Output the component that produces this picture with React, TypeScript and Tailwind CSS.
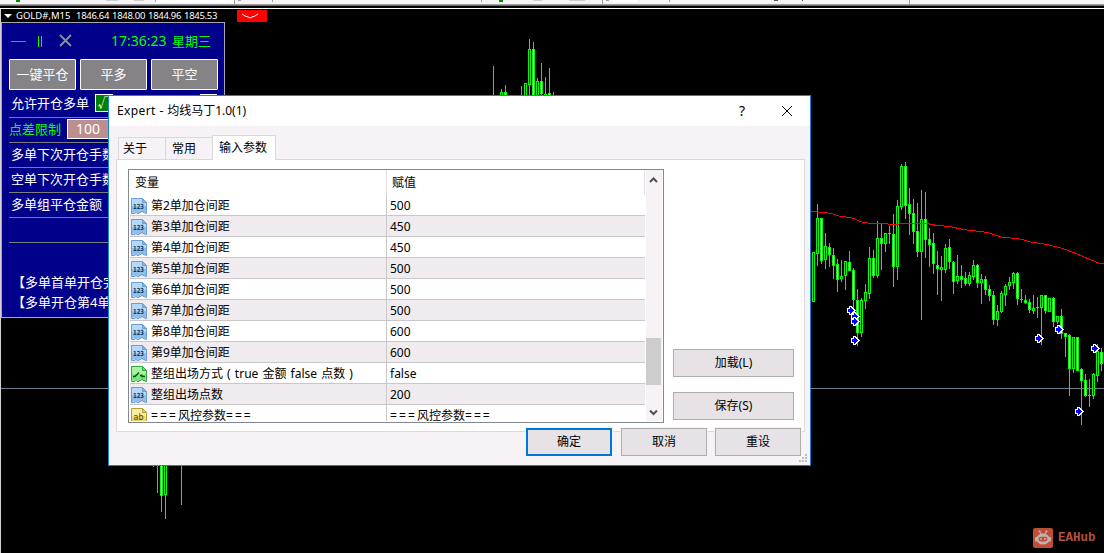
import type { ReactNode } from "react";

type Candle = [x: number, high: number, low: number, top: number, bottom: number, down: 0 | 1];

const candles: Candle[] = [
  [153, 460, 466, 460, 460, 0], [157, 460, 492, 460, 460, 0], [161, 460, 511, 460, 495, 1],
  [165, 460, 518, 460, 494, 0], [181, 460, 504, 460, 460, 0], [493, 66, 100, 100, 100, 0],
  [501, 89, 100, 92, 100, 0], [505, 85, 100, 92, 100, 1], [521, 86, 100, 100, 100, 0],
  [525, 83, 100, 83, 100, 0], [529, 39, 100, 49, 84, 0], [533, 42, 100, 49, 100, 1],
  [537, 78, 100, 81, 100, 0], [541, 63, 94, 81, 93, 1], [545, 77, 100, 94, 94, 0],
  [549, 68, 100, 93, 100, 1], [553, 92, 100, 100, 100, 0],
  [813, 252, 301, 252, 301, 0], [817, 204, 265, 218, 253, 0], [821, 218, 263, 218, 260, 1],
  [825, 233, 268, 246, 259, 0], [829, 243, 266, 247, 254, 1], [833, 248, 278, 255, 265, 1],
  [837, 259, 291, 264, 279, 1], [841, 260, 281, 276, 278, 0], [845, 261, 289, 261, 275, 0],
  [849, 251, 270, 262, 270, 1], [853, 268, 308, 270, 299, 1], [857, 289, 345, 300, 332, 1],
  [861, 298, 336, 300, 332, 0], [865, 284, 308, 292, 300, 0], [869, 247, 298, 258, 293, 0],
  [873, 250, 277, 258, 275, 1], [877, 221, 277, 238, 275, 0], [881, 224, 269, 238, 243, 1],
  [885, 233, 251, 233, 243, 0], [889, 226, 243, 233, 233, 0], [893, 214, 286, 234, 266, 1],
  [897, 200, 279, 206, 266, 0], [901, 164, 209, 166, 206, 0], [905, 162, 218, 166, 205, 1],
  [909, 188, 234, 204, 213, 1], [913, 199, 243, 213, 231, 1], [917, 203, 256, 231, 251, 1],
  [921, 190, 319, 219, 251, 0], [925, 192, 257, 219, 239, 1], [929, 228, 266, 239, 244, 1],
  [933, 233, 273, 243, 263, 1], [937, 251, 294, 265, 268, 1], [941, 256, 300, 267, 269, 0],
  [945, 244, 272, 248, 269, 0], [949, 239, 268, 247, 261, 1], [953, 261, 293, 262, 281, 1],
  [957, 255, 283, 276, 280, 0], [961, 265, 287, 276, 279, 1], [965, 272, 285, 278, 283, 1],
  [969, 272, 285, 275, 283, 0], [973, 260, 279, 265, 276, 0], [977, 264, 287, 265, 282, 1],
  [981, 274, 303, 279, 282, 0], [985, 276, 294, 279, 289, 1], [989, 285, 300, 289, 295, 1],
  [993, 291, 324, 295, 319, 1], [997, 305, 325, 311, 319, 0], [1001, 291, 312, 293, 311, 0],
  [1005, 284, 305, 286, 294, 0], [1009, 277, 289, 282, 285, 0], [1013, 272, 288, 273, 282, 0],
  [1017, 272, 304, 273, 298, 1], [1021, 289, 302, 299, 299, 0], [1025, 295, 303, 300, 302, 1],
  [1029, 299, 312, 302, 309, 1], [1033, 295, 313, 308, 310, 0], [1037, 297, 317, 307, 307, 0],
  [1041, 295, 344, 295, 307, 0], [1045, 295, 313, 295, 310, 1], [1049, 298, 311, 298, 311, 0],
  [1053, 297, 326, 298, 321, 1], [1057, 316, 323, 316, 321, 0], [1061, 309, 338, 316, 333, 1],
  [1065, 333, 356, 333, 336, 1], [1069, 334, 395, 335, 368, 1], [1073, 337, 372, 337, 368, 0],
  [1077, 337, 370, 337, 370, 1], [1081, 368, 424, 369, 380, 1], [1085, 374, 396, 380, 395, 1],
  [1089, 379, 406, 395, 395, 0], [1093, 373, 398, 374, 395, 0], [1097, 344, 381, 351, 375, 0],
  [1101, 348, 370, 352, 363, 1],
];

const arrows = [
  [851, 310], [855, 316], [855, 321], [855, 340],
  [1039, 338], [1059, 329], [1095, 348], [1079, 411],
];

const rows = [
  { kind: "num", name: "第2单加仓间距", value: "500" },
  { kind: "num", name: "第3单加仓间距", value: "450" },
  { kind: "num", name: "第4单加仓间距", value: "450" },
  { kind: "num", name: "第5单加仓间距", value: "500" },
  { kind: "num", name: "第6单加仓间距", value: "500" },
  { kind: "num", name: "第7单加仓间距", value: "500" },
  { kind: "num", name: "第8单加仓间距", value: "600" },
  { kind: "num", name: "第9单加仓间距", value: "600" },
  { kind: "bool", name: "整组出场方式 ( true 金额 false 点数 )", value: "false" },
  { kind: "num", name: "整组出场点数", value: "200" },
  { kind: "str", name: "===风控参数===", value: "===风控参数===" },
];

const Chart = () => (
  <svg className="absolute inset-0" width="1104" height="553" shapeRendering="crispEdges">
    <rect x="1" y="388" width="1103" height="1" fill="#708090" />
    {candles.map(([x, high, low, top, bottom, down]) => (
      <g key={x} fill="#00ff00">
        <rect x={x} y={high} width="1" height={low - high + 1} />
        <rect x={x - 1} y={top} width="3" height={bottom - top + 1} />
        {bottom - top > 1 && (
          <rect x={x} y={top + 1} width="1" height={bottom - top - 1} fill={down ? "#fff" : "#000"} />
        )}
      </g>
    ))}
    <polyline
      fill="none"
      stroke="#ff0000"
      points="811,211.5 823,212.5 832,213.5 840,216.5 851,217.5 863,222.5 873,223.5 887,223.5 889,224.5 898,224.5 900,223.5 927,223.5 937,225.5 950,226.5 963,229.5 980,231.5 987,232.5 1003,237.5 1018,238.5 1033,242.5 1047,244.5 1063,248.5 1076,253.5 1083,256.5 1090,259.5 1100,263.5 1104,263.5"
    />
    {arrows.map(([x, y]) => (
      <g key={`${x}-${y}`} transform={`translate(${x - 4} ${y - 4})`}>
        <path d="M0 2h2v-2h3v1h1v1h1v1h1v1h1v1h-1v1h-1v1h-1v1h-1v1h-3v-2h-2z" fill="#fff" />
        <path d="M1 3h2v-2h1v1h1v1h1v1h1v1h-1v1h-1v1h-1v1h-1v-2h-2z" fill="#0000ff" />
      </g>
    ))}
  </svg>
);

const Toolbar = () => (
  <div className="h-[9px] w-full border-b border-white bg-black">
    <svg className="block" width="1104" height="6" shapeRendering="crispEdges">
      <rect width="1104" height="4" fill="#f6f3f6" />
      <rect y="4" width="1104" height="1" fill="#a09da0" />
      <rect y="5" width="1104" height="1" fill="#686868" />
      <g fill="#fff">
        <rect x="156" width="77" height="3" />
        <rect x="612" width="26" height="2" />
      </g>
      <g fill="#cfcccf">
        <rect x="106" width="12" height="1" />
        <rect x="134" width="10" height="1" />
        <rect x="533" width="9" height="1" />
        <rect x="569" width="16" height="1" />
      </g>
      <g fill="#a09da0">
        <rect x="155" width="1" height="2" />
        <rect x="234" width="1" height="4" />
        <rect x="238" width="3" height="1" />
        <rect x="272" width="1" height="2" />
        <rect x="481" width="1" height="2" />
        <rect x="602" width="1" height="4" />
        <rect x="606" width="3" height="1" />
        <rect x="669" width="1" height="2" />
        <rect x="909" width="1" height="4" />
      </g>
      <g fill="#008a00">
        <rect x="16" width="4" height="2" />
        <rect x="499" width="4" height="2" />
      </g>
      <g fill="#555">
        <rect x="774" width="4" height="1" />
        <rect x="802" width="1" height="1" />
      </g>
    </svg>
  </div>
);

const PanelButton = ({ children }: { children: ReactNode }) => (
  <div className="flex h-[31px] w-[67px] shrink-0 items-center justify-center rounded-[1px] border border-white bg-[#858385] text-[13px]">
    {children}
  </div>
);

const PanelRow = ({ children }: { children?: ReactNode }) => (
  <div className="flex h-[25px] items-center border-b border-[#7d7d7d] pb-[2px] pl-[2px] whitespace-nowrap">
    {children}
  </div>
);

const TradePanel = () => (
  <div className="absolute top-[22px] left-[1px] h-[296px] w-[224px] overflow-hidden border border-[#a9a9b4] bg-[#00008b] pr-[5px] pl-[7px] text-[13px] leading-none text-white">
    <div className="flex h-[36px] items-center text-[#00ff00]">
      <svg className="shrink-0" width="64" height="20" viewBox="0 0 64 20" fill="none">
        <path d="M2 10.5h15" stroke="#778899" />
        <path d="M29.500 5v11M32.500 5v11" stroke="#00ff00" />
        <path d="M51 4l11 11M62 4l-11 11" stroke="#8593a3" strokeWidth="1.800" />
      </svg>
      <span className="ml-[38px] w-[61px] text-[14px] whitespace-nowrap">17:36:23</span>
      <span>星期三</span>
    </div>
    <div className="flex gap-[4px]">
      <PanelButton>一键平仓</PanelButton>
      <PanelButton>平多</PanelButton>
      <PanelButton>平空</PanelButton>
    </div>
    <div className="flex h-[28px] items-center border-b border-[#7d7d7d] pl-[2px]">
      <span className="w-[84px]">允许开仓多单</span>
      <span className="-mt-[2px] flex h-[18px] w-[18px] items-center justify-center border border-white bg-[#008000]">√</span>
      <span className="-mt-[2px] ml-[87px] h-[18px] w-[17px] border border-white bg-[#008000]" />
    </div>
    <div className="flex h-[25px] items-center border-b border-[#7d7d7d] pb-[2px]">
      <span className="w-[58px] text-[#00ff00]">点差限制</span>
      <span className="flex h-[20px] w-[60px] items-center border border-white bg-[#bc8f8f] pl-[8px] text-[14px]">100</span>
    </div>
    <PanelRow>多单下次开仓手数</PanelRow>
    <PanelRow>空单下次开仓手数</PanelRow>
    <PanelRow>多单组平仓金额</PanelRow>
    <PanelRow />
    <div className="mt-[33px] flex w-[105px] flex-col gap-[7px] pl-[3px] whitespace-nowrap">
      <span>【多单首单开仓完</span>
      <span>【多单开仓第4单</span>
    </div>
  </div>
);

const ParamIcon = ({ kind }: { kind: string }) => {
  const [light, dark, edge, ink] =
    kind === "num"
      ? ["#b4d9fb", "#7db4e6", "#6c9fd0", "#12365f"]
      : kind === "bool"
        ? ["#a6f3a2", "#6be06d", "#35a843", "#0a4d14"]
        : ["#f8eda0", "#e8d45c", "#b79d35", "#4d3b08"];
  return (
    <svg className="shrink-0" width="16" height="16" viewBox="0 0 16 16">
      <path
        d="M.5 .5h11l4 4v11h-1.500v-1h-2v-1h-2v1h-2v1h-2v-1h-2v1h-3.500z"
        fill={light}
        stroke={edge}
      />
      <path d="M1 8h14v6h-3v-1h-3v1h-3v1h-2v-1h-2v1h-1z" fill={dark} opacity=".7" />
      <path d="M11.500 .5v4h4z" fill={dark} stroke={edge} />
      {kind === "bool" ? (
        <path d="M2 10.500h2l4-4M9 9.500h2v1h3" fill="none" stroke={ink} strokeWidth="1.300" />
      ) : (
        <text
          x="7.500"
          y={kind === "num" ? 11 : 12}
          textAnchor="middle"
          fill={ink}
          fontSize={kind === "num" ? 7 : 9}
          fontWeight={kind === "num" ? 700 : 400}
          fontFamily="DejaVu Sans, sans-serif"
          textLength={kind === "num" ? 11 : 10}
          lengthAdjust="spacingAndGlyphs"
        >
          {kind === "num" ? "123" : "ab"}
        </text>
      )}
    </svg>
  );
};

// the === markers of section titles are set wider than the title itself
const ParamText = ({ children }: { children: string }) => (
  <span className="whitespace-pre">
    {children.split(/(===)/).map((part, i) => (
      <span key={i} className={part === "===" ? "tracking-[2.1px]" : ""}>
        {part}
      </span>
    ))}
  </span>
);

const ParamTable = () => (
  <div className="flex h-[254px] w-[536px] justify-between border border-[#828790] bg-white p-px pt-0">
    <div className="w-[515px] overflow-hidden">
      <div className="flex h-[25px] items-center border-r border-[#e2e0e2]">
        <span className="flex h-full w-[257px] items-center border-r border-[#e2e0e2] pl-[5px]">变量</span>
        <span className="pl-[5px]">赋值</span>
      </div>
      {rows.map((row, i) => (
        <div
          key={row.name}
          className={`flex h-[21px] items-center border-b border-[#c9c7c9] pt-px ${i % 2 ? "bg-[#efebef]" : "bg-white"}`}
        >
          <div className="-mt-px flex h-[20px] w-[257px] items-center gap-1 border-r border-[#c9c7c9] pt-[2px] pl-px">
            <ParamIcon kind={row.kind} />
            <span className={row.kind === "bool" ? "[word-spacing:1px]" : ""}>
              <ParamText>{row.name}</ParamText>
            </span>
          </div>
          <span className="pt-px pl-[3px]">
            <ParamText>{row.value}</ParamText>
          </span>
        </div>
      ))}
    </div>
    <div className="flex w-[16px] flex-col items-center bg-[#f6f2f6]">
      <svg className="shrink-0" width="16" height="18" viewBox="0 0 16 18">
        <path d="M4 12l3.500-3.500l3.500 3.500" fill="none" stroke="#505050" strokeWidth="2" />
      </svg>
      <div className="mt-[150px] -ml-px h-[47px] w-[15px] shrink-0 bg-[#cdcdcd]" />
      <svg className="mt-auto shrink-0" width="16" height="18" viewBox="0 0 16 18">
        <path d="M4 7.500l3.500 3.500l3.500-3.500" fill="none" stroke="#505050" strokeWidth="2" />
      </svg>
    </div>
  </div>
);

const DialogButton = ({ className, children }: { className: string; children: ReactNode }) => (
  <button className={`flex h-[28px] items-center justify-center bg-[#e6e2e6] ${className}`}>{children}</button>
);

const ExpertDialog = () => (
  <div className="absolute top-[95px] left-[108px] flex h-[371px] w-[703px] flex-col border border-[#1883d7] bg-[#f6f2f6] text-[12px] leading-none text-black">
    <div className="flex h-[30px] shrink-0 items-center bg-white pl-2">
      <span>
        <span className="tracking-[0.4px]">Expert - </span>均线马丁1.0(1)
      </span>
      <span className="ml-auto text-[14px]">?</span>
      <svg className="mr-[17px] ml-[36px]" width="12" height="12" viewBox="0 0 12 12">
        <path d="M1 1l10 10M11 1L1 11" stroke="#000" />
      </svg>
    </div>
    <div className="flex h-[33px] shrink-0 items-end pl-[9px]">
      <div className="flex h-[22px] w-[47px] items-center border-t border-l border-[#dcd9dc] pl-[4px]">关于</div>
      <div className="flex h-[22px] w-[47px] items-center border-t border-l border-[#dcd9dc] pl-[6px]">常用</div>
      <div className="z-10 -mb-px flex h-[25px] w-[64px] items-center border border-b-0 border-[#dcd9dc] bg-white pl-[6px]">
        输入参数
      </div>
    </div>
    <div className="ml-[7px] flex h-[273px] w-[689px] shrink-0 gap-[9px] border border-[#dcd9dc] bg-white pt-[9px] pl-[11px]">
      <ParamTable />
      <div className="flex flex-col gap-[15px] pt-[180px]">
        <DialogButton className="w-[121px] border border-[#adadad]">加载(L)</DialogButton>
        <DialogButton className="w-[121px] border border-[#adadad]">保存(S)</DialogButton>
      </div>
    </div>
    <div className="relative -mt-[4px] flex justify-end gap-[8px] pr-[9px]">
      <DialogButton className="mr-px w-[86px] border-2 border-[#0078d7] shadow-[0_0_0_1px_#f6f2f6]">确定</DialogButton>
      <DialogButton className="w-[86px] border border-[#adadad] shadow-[0_0_0_1px_#f6f2f6]">取消</DialogButton>
      <DialogButton className="w-[86px] border border-[#adadad] shadow-[0_0_0_1px_#f6f2f6]">重设</DialogButton>
      <svg className="absolute right-[3px] -bottom-[7px]" width="8" height="9" viewBox="0 0 8 9" fill="#bfbfbf">
        <path d="M6 0h2v2h-2zM3 3h2v2h-2zM6 3h2v2h-2zM0 6h2v2h-2zM3 6h2v2h-2zM6 6h2v2h-2z" />
      </svg>
    </div>
  </div>
);

const App = () => {
  return (
    <main className="relative h-[553px] w-[1104px] overflow-hidden bg-black font-['Noto_Sans','Noto_Sans_CJK_SC',sans-serif]">
      <Toolbar />
      <Chart />
      <div className="relative flex h-[14px] items-center border-l border-[#d4d0d4] pl-[3px] text-[9.500px] leading-none whitespace-nowrap text-white">
        <svg width="8" height="5" viewBox="0 0 8 5">
          <path d="M0 0h8l-4 4z" fill="#fff" />
        </svg>
        <span className="ml-[4px] w-[60px]">GOLD#,M15</span>
        <span className="tracking-[-0.3px] [word-spacing:0.8px]">1846.64 1848.00 1844.96 1845.53</span>
        <svg className="absolute top-px left-[236px]" width="30" height="12" viewBox="0 0 30 12">
          <rect width="30" height="12" fill="#ff0000" />
          <path d="M5 4l4 2.500h1l3 1.500l3-1.500h1l4-2.500" fill="none" stroke="#fff" />
        </svg>
      </div>
      <div className="h-full w-px bg-[#d4d0d4]" />
      <TradePanel />
      <ExpertDialog />
      <div className="absolute top-[528px] left-[1033px] flex items-center gap-[5px] font-['Liberation_Mono',monospace] text-[12.500px] leading-none font-bold text-[#b4533c]">
        <svg width="20" height="20" viewBox="0 0 20 20">
          <rect width="20" height="20" rx="2" fill="#c04e36" />
          <path d="M6.500 3l2 4M13.500 3l-2 4" stroke="#bcb2b0" strokeWidth="1.200" />
          <circle cx="6.500" cy="3.300" r="1" fill="#bcb2b0" />
          <circle cx="13.500" cy="3.300" r="1" fill="#bcb2b0" />
          <rect x="2" y="9" width="16" height="4.500" rx="1" fill="#bcb2b0" />
          <ellipse cx="10" cy="11" rx="6.500" ry="5.500" fill="#bcb2b0" />
          <rect x="5.500" y="8.800" width="9" height="4.600" rx="2.300" fill="#c04e36" />
          <circle cx="8" cy="11.100" r="1" fill="#bcb2b0" />
          <circle cx="12" cy="11.100" r="1" fill="#bcb2b0" />
        </svg>
        <span className="pt-px">EAHub</span>
      </div>
    </main>
  );
};

export default App;
